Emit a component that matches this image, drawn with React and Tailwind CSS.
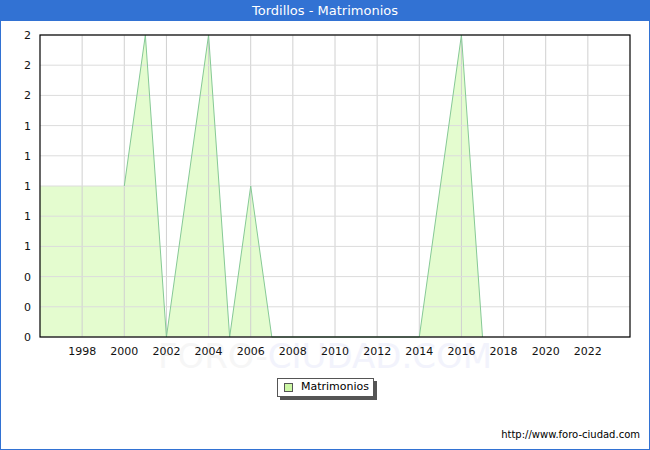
export default function App() {
  const X = (y) => 40 + (y - 1996) * (590 / 28);
  const Y = (v) => 337 - v * 151;
  const pts = [[2000,1],[2001,2],[2002,0],[2004,2],[2005,0],[2006,1],[2007,0],[2014,0],[2016,2],[2017,0]];
  const line = pts.map(([a,b]) => `${X(a)},${Y(b)}`).join(" ");
  const fill = `40,337 40,${Y(1)} ${line} ${X(2017)},337`;
  const years = [];
  for (let y = 1998; y <= 2022; y += 2) years.push(y);
  const hl = [0,1,2,3,4,5,6,7,8,9,10];
  const ylab = ["2","2","2","1","1","1","1","1","0","0","0"];
  return (
    <div className="w-[650px] h-[450px] flex flex-col bg-white border border-[#3272d3] border-t-0 overflow-hidden" style={{fontFamily:'"DejaVu Sans", sans-serif'}}>
      <div className="h-[21px] bg-[#3272d3] text-white text-[13px] flex items-center justify-center shrink-0">Tordillos - Matrimonios</div>
      <div className="relative flex-1">
        <svg width="650" height="450" className="absolute left-[-1px] top-[-21px]">
          <polygon points={fill} fill="#e4fccf" />
          {years.map(y => <line key={y} x1={X(y)} x2={X(y)} y1="35" y2="337" stroke="#d0d0d0" />)}
          {hl.map(i => <line key={i} x1="40" x2="630" y1={35 + i*30.2} y2={35 + i*30.2} stroke="#dcdcdc" />)}
          <polyline points={line} fill="none" stroke="#86c996" strokeWidth="1" />
          <rect x="40" y="35" width="590" height="302" fill="none" stroke="#000" strokeWidth="1.2" />
          <text x="325" y="368" textAnchor="middle" fontSize="34" fill="#f6f6f6" fontFamily="DejaVu Sans">FORO-<tspan fill="#f2f3fc">CIUDAD.COM</tspan></text>
          {hl.map(i => <text key={i} x="31" y={35 + i*30.2 + 4} textAnchor="end" fontSize="11" fill="#111">{ylab[i]}</text>)}
          {years.map(y => <text key={y} x={X(y)} y="355" textAnchor="middle" fontSize="11" fill="#111">{y}</text>)}
        </svg>
        <div className="absolute left-[276px] top-[357px] w-[97px] h-[19px] bg-white border border-[#555] shadow-[3px_3px_0_#555] flex items-center gap-[8px] pl-[6px] text-[11px] text-black">
          <span className="w-[9px] h-[9px] bg-[#ccf7a5] border border-[#555]"></span>Matrimonios
        </div>
        <div className="absolute right-[9px] top-[406px] text-[10px] text-black">http://www.foro-ciudad.com</div>
      </div>
    </div>
  );
}
